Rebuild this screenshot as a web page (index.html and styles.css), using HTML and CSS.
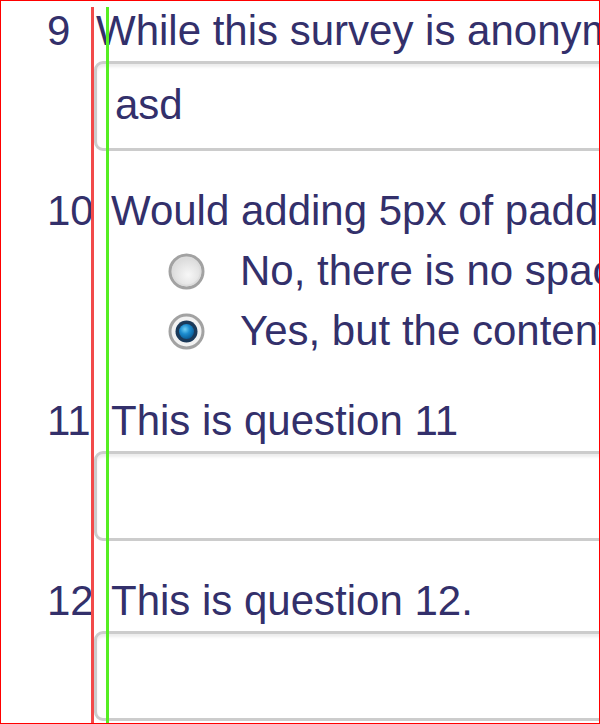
FILE: index.html
```html
<!DOCTYPE html>
<html>
<head>
  <title>Survey padding test</title>
  <link rel="stylesheet" href="styles.css">
</head>
<body>
  <div class="frame">
    <div class="question q-short">
      <div class="q-head"><span class="num">9</span><span class="q-text">While this survey is anonymous, please do not enter personal details.</span></div>
      <textarea class="answer">asd</textarea>
    </div>

    <div class="question">
      <div class="q-head"><span class="num">10</span><span class="q-text">Would adding 5px of padding to the left help?</span></div>
      <ul class="options">
        <li>
          <svg class="radio" width="37" height="37" viewBox="0 0 37 37">
            <defs>
              <radialGradient id="off" cx="55%" cy="60%" r="60%">
                <stop offset="0" stop-color="#f7f7f7"/>
                <stop offset="1" stop-color="#d6d6d6"/>
              </radialGradient>
            </defs>
            <circle cx="18.5" cy="18.5" r="16.5" fill="url(#off)" stroke="#a2a2a2" stroke-width="3"/>
            <circle cx="18.5" cy="18.5" r="14" fill="none" stroke="#dcdcdc" stroke-width="1.5"/>
          </svg>
          <span>No, there is no space problem at all</span>
        </li>
        <li>
          <svg class="radio" width="37" height="37" viewBox="0 0 37 37">
            <defs>
              <radialGradient id="on" cx="40%" cy="35%" r="65%">
                <stop offset="0" stop-color="#6fd0f6"/>
                <stop offset="0.5" stop-color="#1c8ccf"/>
                <stop offset="1" stop-color="#0b5f9a"/>
              </radialGradient>
            </defs>
            <circle cx="18.5" cy="18.5" r="16.5" fill="#f2f2f2" stroke="#a2a2a2" stroke-width="3"/>
            <circle cx="18.5" cy="18.5" r="11" fill="#1b3a5a"/>
            <circle cx="18.5" cy="18.5" r="7.5" fill="url(#on)"/>
          </svg>
          <span>Yes, but the content would shift</span>
        </li>
      </ul>
    </div>

    <div class="question">
      <div class="q-head"><span class="num">11</span><span class="q-text">This is question 11</span></div>
      <textarea class="answer"></textarea>
    </div>

    <div class="question">
      <div class="q-head"><span class="num">12</span><span class="q-text">This is question 12.</span></div>
      <textarea class="answer"></textarea>
    </div>

    <!-- alignment guides -->
    <div class="guide guide-red"></div>
    <div class="guide guide-green"></div>
  </div>
</body>
</html>
```

FILE: styles.css
```css
body {
  margin: 0;
  padding: 0;
  font-family: "Liberation Sans", Arial, sans-serif;
  color: #33306b;
  background: #fff;
}

.frame {
  position: relative;
  box-sizing: border-box;
  width: 600px;
  height: 724px;
  border: 1px solid #ff0000;
  overflow: hidden;
  font-size: 42px;
}

.question {
  margin-bottom: 30px;
}

.q-head {
  display: flex;
  white-space: nowrap;
  line-height: 60px;
  padding-left: 46px;
}

.num {
  flex: none;
  width: 64px;
}

.q-short .num {
  width: 49px;
}

.answer {
  display: block;
  box-sizing: border-box;
  width: 600px;
  height: 90px;
  margin: 0 0 0 93px;
  padding: 11px 18px 0 18px;
  border: 3px solid #cccccc;
  border-radius: 9px;
  box-shadow: inset 0 3px 3px rgba(0, 0, 0, .075);
  font-family: inherit;
  font-size: 42px;
  line-height: 60px;
  color: #33306b;
  resize: none;
  overflow: hidden;
  outline: none;
}

.options {
  list-style: none;
  margin: 0;
  padding: 0 0 0 167px;
}

.options li {
  display: flex;
  align-items: center;
  white-space: nowrap;
  height: 60px;
  line-height: 60px;
}

.radio {
  flex: none;
  margin-right: 35px;
}

/* vertical guide lines drawn over the form */
.guide {
  position: absolute;
  top: 6px;
  bottom: 0;
  width: 3px;
}

.guide-red {
  left: 90px;
  background: #f24a4a;
}

.guide-green {
  left: 105px;
  background: #55ee22;
}
```
